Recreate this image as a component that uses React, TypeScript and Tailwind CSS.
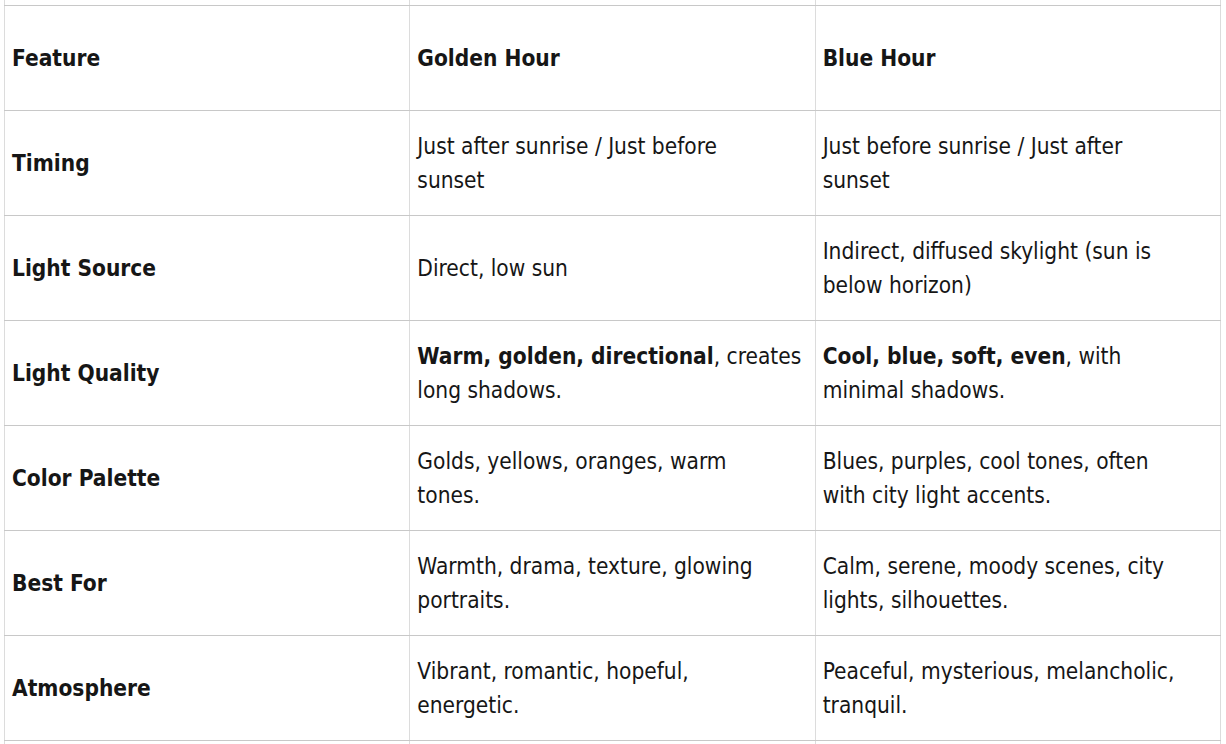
import { Fragment } from 'react';

type Line = React.ReactNode;

const rows: { feature: string; golden: Line[]; blue: Line[] }[] = [
  {
    feature: 'Timing',
    golden: ['Just after sunrise / Just before', 'sunset'],
    blue: ['Just before sunrise / Just after', 'sunset'],
  },
  {
    feature: 'Light Source',
    golden: ['Direct, low sun'],
    blue: ['Indirect, diffused skylight (sun is', 'below horizon)'],
  },
  {
    feature: 'Light Quality',
    golden: [
      <>
        <strong className="font-bold">Warm, golden, directional</strong>, creates
      </>,
      'long shadows.',
    ],
    blue: [
      <>
        <strong className="font-bold">Cool, blue, soft, even</strong>, with
      </>,
      'minimal shadows.',
    ],
  },
  {
    feature: 'Color Palette',
    golden: ['Golds, yellows, oranges, warm', 'tones.'],
    blue: ['Blues, purples, cool tones, often', 'with city light accents.'],
  },
  {
    feature: 'Best For',
    golden: ['Warmth, drama, texture, glowing', 'portraits.'],
    blue: ['Calm, serene, moody scenes, city', 'lights, silhouettes.'],
  },
  {
    feature: 'Atmosphere',
    golden: ['Vibrant, romantic, hopeful,', 'energetic.'],
    blue: ['Peaceful, mysterious, melancholic,', 'tranquil.'],
  },
];

const cell =
  'h-[105px] pl-[7px] pr-2 align-middle border-x border-x-[#dcdcdc] border-y border-y-[#c8c8c8]';
const edge = 'p-0 border-x border-x-[#dcdcdc]';

function Lines({ lines }: { lines: Line[] }) {
  return (
    <div className="whitespace-nowrap">
      {lines.map((l, i) => (
        <Fragment key={i}>
          {i > 0 && <br />}
          {l}
        </Fragment>
      ))}
    </div>
  );
}

export default function App() {
  return (
    <div className="min-h-screen bg-white overflow-hidden pl-1 text-[#161616] font-['DejaVu_Sans_Condensed','DejaVu_Sans',sans-serif] text-[22.5px] leading-[34px]">
      <table className="w-[1217px] table-fixed border-collapse">
        <tbody>
          {/* row above, cut off by the viewport */}
          <tr>
            <td className={`h-[5px] border-b border-b-[#c8c8c8] ${edge}`} />
            <td className={`h-[5px] border-b border-b-[#c8c8c8] ${edge}`} />
            <td className={`h-[5px] border-b border-b-[#c8c8c8] ${edge}`} />
          </tr>
          <tr>
            <th className={`${cell} h-[104px] text-left font-bold`}>Feature</th>
            <th className={`${cell} h-[104px] text-left font-bold`}>Golden Hour</th>
            <th className={`${cell} h-[104px] text-left font-bold`}>Blue Hour</th>
          </tr>
          {rows.map((r) => (
            <tr key={r.feature}>
              <td className={`${cell} font-bold`}>{r.feature}</td>
              <td className={cell}>
                <Lines lines={r.golden} />
              </td>
              <td className={cell}>
                <Lines lines={r.blue} />
              </td>
            </tr>
          ))}
          {/* row below, cut off */}
          <tr>
            <td className={`h-[20px] border-t border-t-[#c8c8c8] ${edge}`} />
            <td className={`h-[20px] border-t border-t-[#c8c8c8] ${edge}`} />
            <td className={`h-[20px] border-t border-t-[#c8c8c8] ${edge}`} />
          </tr>
        </tbody>
      </table>
    </div>
  );
}
